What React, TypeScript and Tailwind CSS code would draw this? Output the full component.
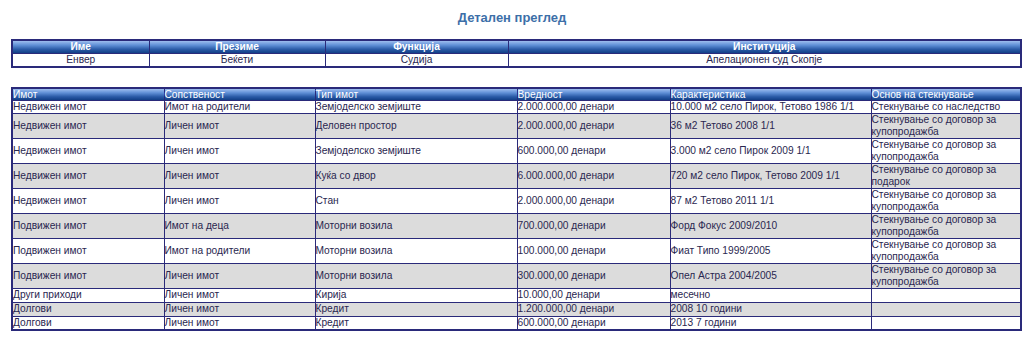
import React from "react";

const hdr =
  "bg-[linear-gradient(to_bottom,#9dbdee_0%,#5f8fd6_35%,#2a5aa6_70%,#123f86_100%)] text-white font-bold text-[10.2px] leading-[11px] border border-[#2a2a7a] p-0";

const rows: [string, string, string, string, string, string][] = [
  ["Недвижен имот", "Имот на родители", "Земјоделско земјиште", "2.000.000,00 денари", "10.000 м2 село Пирок, Тетово 1986 1/1", "Стекнување со наследство"],
  ["Недвижен имот", "Личен имот", "Деловен простор", "2.000.000,00 денари", "36 м2 Тетово 2008 1/1", "Стекнување со договор за купопродажба"],
  ["Недвижен имот", "Личен имот", "Земјоделско земјиште", "600.000,00 денари", "3.000 м2 село Пирок 2009 1/1", "Стекнување со договор за купопродажба"],
  ["Недвижен имот", "Личен имот", "Куќа со двор", "6.000.000,00 денари", "720 м2 село Пирок, Тетово 2009 1/1", "Стекнување со договор за подарок"],
  ["Недвижен имот", "Личен имот", "Стан", "2.000.000,00 денари", "87 м2 Тетово 2011 1/1", "Стекнување со договор за купопродажба"],
  ["Подвижен имот", "Имот на деца", "Моторни возила", "700.000,00 денари", "Форд Фокус 2009/2010", "Стекнување со договор за купопродажба"],
  ["Подвижен имот", "Имот на родители", "Моторни возила", "100.000,00 денари", "Фиат Типо 1999/2005", "Стекнување со договор за купопродажба"],
  ["Подвижен имот", "Личен имот", "Моторни возила", "300.000,00 денари", "Опел Астра 2004/2005", "Стекнување со договор за купопродажба"],
  ["Други приходи", "Личен имот", "Кирија", "10.000,00 денари", "месечно", ""],
  ["Долгови", "Личен имот", "Кредит", "1.200.000,00 денари", "2008 10 години", ""],
  ["Долгови", "Личен имот", "Кредит", "600.000,00 денари", "2013 7 години", ""],
];

const cell = "border border-[#2a2a7a] p-0 text-[10.2px] leading-[12px] text-[#2a2750] align-middle";

export default function App() {
  return (
    <div className="w-[1024px] h-[345px] bg-white font-['Liberation_Sans',Arial,sans-serif] overflow-hidden">
      <div className="pt-[10px] text-center text-[13px] leading-[15px] font-bold text-[#3d6fa8]">Детален преглед</div>
      <table className="ml-[11px] mt-[14px] w-[1011px] border-collapse table-fixed border-2 border-[#2a2a7a]">
        <colgroup>
          <col className="w-[137px]" />
          <col className="w-[176px]" />
          <col className="w-[183px]" />
          <col />
        </colgroup>
        <thead>
          <tr className="h-[13px]">
            {["Име", "Презиме", "Функција", "Институција"].map((h) => (
              <th key={h} className={hdr + " text-center"}>{h}</th>
            ))}
          </tr>
        </thead>
        <tbody>
          <tr className="h-[13px]">
            {["Енвер", "Беќети", "Судија", "Апелационен суд Скопје"].map((d) => (
              <td key={d} className={cell + " text-center"}>{d}</td>
            ))}
          </tr>
        </tbody>
      </table>
      <table className="ml-[11px] mt-[19px] w-[1011px] border-collapse table-fixed border-2 border-[#2a2a7a]">
        <colgroup>
          <col className="w-[152px]" />
          <col className="w-[151px]" />
          <col className="w-[202px]" />
          <col className="w-[153px]" />
          <col className="w-[201px]" />
          <col />
        </colgroup>
        <thead>
          <tr className="h-[12px]">
            {["Имот", "Сопственост", "Тип имот", "Вредност", "Карактеристика", "Основ на стекнување"].map((h) => (
              <th key={h} className={hdr + " text-left font-normal"}>{h}</th>
            ))}
          </tr>
        </thead>
        <tbody>
          {rows.map((r, i) => (
            <tr key={i} className={i % 2 === 1 ? "bg-[#dcdcdc]" : "bg-white"}>
              {r.map((c, j) => (
                <td
                  key={j}
                  className={
                    cell +
                    (i >= 1 && i <= 7 && j < 5 ? " h-[25px]" : i >= 8 ? " h-[14px]" : " h-[13px]")
                  }
                >
                  {c || "\u00a0"}
                </td>
              ))}
            </tr>
          ))}
        </tbody>
      </table>
    </div>
  );
}
